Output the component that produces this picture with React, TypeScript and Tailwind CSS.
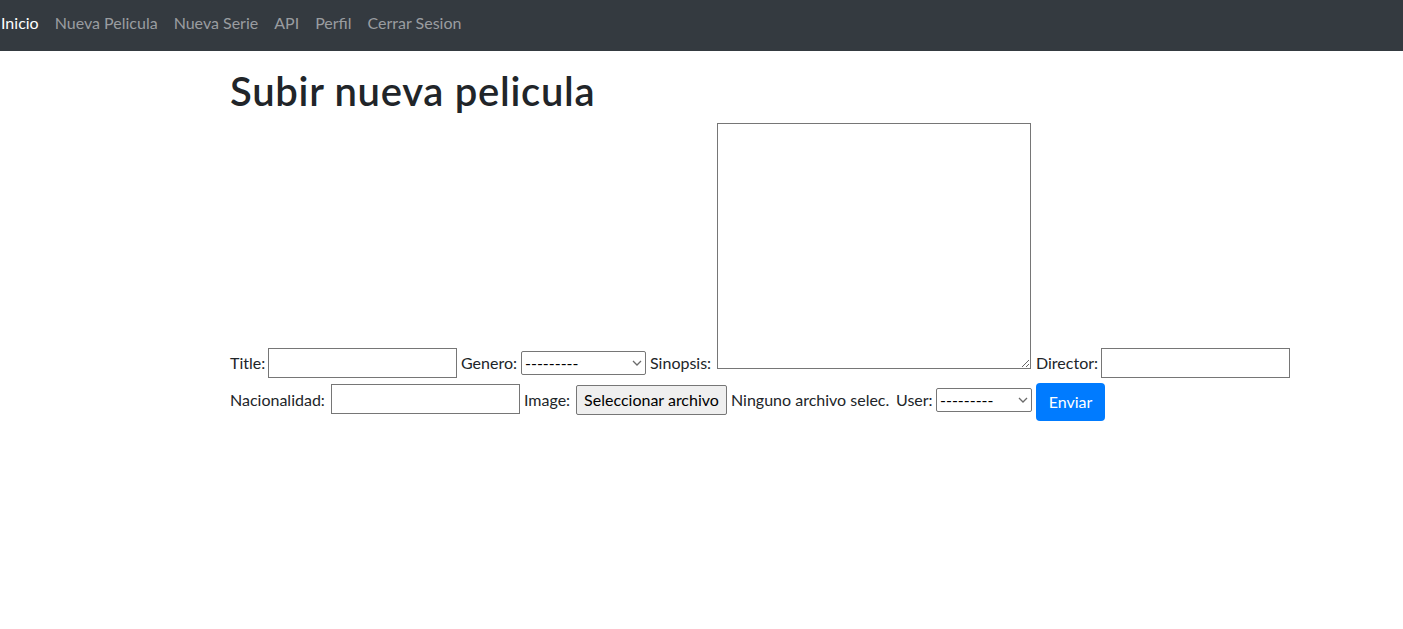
const navLinks = ["Inicio", "Nueva Pelicula", "Nueva Serie", "API", "Perfil", "Cerrar Sesion"];

function Select({ width }: { width: string }) {
  return (
    <span className="relative inline-block mr-1">
      <select
        className={`${width} h-[24px] appearance-none border border-[#767676] rounded-[2px] bg-white pl-[3px] pr-5 text-[16px] leading-[20px] text-black align-baseline`}
        defaultValue=""
      >
        <option value="">---------</option>
      </select>
      <svg
        className="pointer-events-none absolute right-[4px] top-[9px]"
        width="10"
        height="6"
        viewBox="0 0 10 6"
        fill="none"
      >
        <path d="M1 1l4 4 4-4" stroke="#6b6b6b" strokeWidth="1.3" />
      </svg>
    </span>
  );
}

function TextInput() {
  return (
    <input
      type="text"
      className="w-[189px] h-[30px] mr-1 border border-[#767676] bg-white px-[2px] align-baseline"
    />
  );
}

export default function App() {
  return (
    <div className="min-h-screen bg-white text-[#212529] text-[16px] leading-[24px]" style={{ fontFamily: "Lato, 'Noto Sans', sans-serif" }}>
      <nav className="h-[51px] bg-[#343a40] flex items-center pb-[6px]">
        <ul className="flex gap-4 pl-[1px]">
          {navLinks.map((l, i) => (
            <li key={l}>
              <a href="#" className={i === 0 ? "text-white" : "text-[#9a9da0]"}>
                {l}
              </a>
            </li>
          ))}
        </ul>
      </nav>

      <main className="pl-[230px] pt-4">
        <h1 className="text-[40px] leading-[48px] font-semibold tracking-[0.7px] mb-2">Subir nueva pelicula</h1>
        <form className="w-[1110px]">
          <div>
            <label className="inline-block w-[38px]">Title:</label>
            <TextInput />
            <label className="inline-block w-[60px]">Genero:</label>
            <Select width="w-[125px]" />
            <label className="inline-block w-[67px]">Sinopsis:</label>
            <textarea className="w-[314px] h-[246px] mr-[5px] border border-[#767676] bg-white align-baseline" />
            <label className="inline-block w-[65px]">Director:</label>
            <TextInput />
          </div>
          <div className="mt-[5px]">
            <label className="inline-block w-[101px]">Nacionalidad:</label>
            <TextInput />
            <label className="inline-block w-[52px]">Image:</label>
            <span className="inline-block w-[151px] h-[30px] border border-[#767676] rounded-[2px] bg-[#efefef] text-black text-center leading-[28px] align-baseline">
              Seleccionar archivo
            </span>
            <span className="inline-block w-[169px] pl-1">Ninguno archivo selec.</span>
            <label className="inline-block w-[40px]">User:</label>
            <Select width="w-[96px]" />
            <button
              type="button"
              className="inline-block w-[69px] h-[38px] rounded-[4px] bg-[#007bff] text-white align-middle"
            >
              Enviar
            </button>
          </div>
        </form>
      </main>
    </div>
  );
}
